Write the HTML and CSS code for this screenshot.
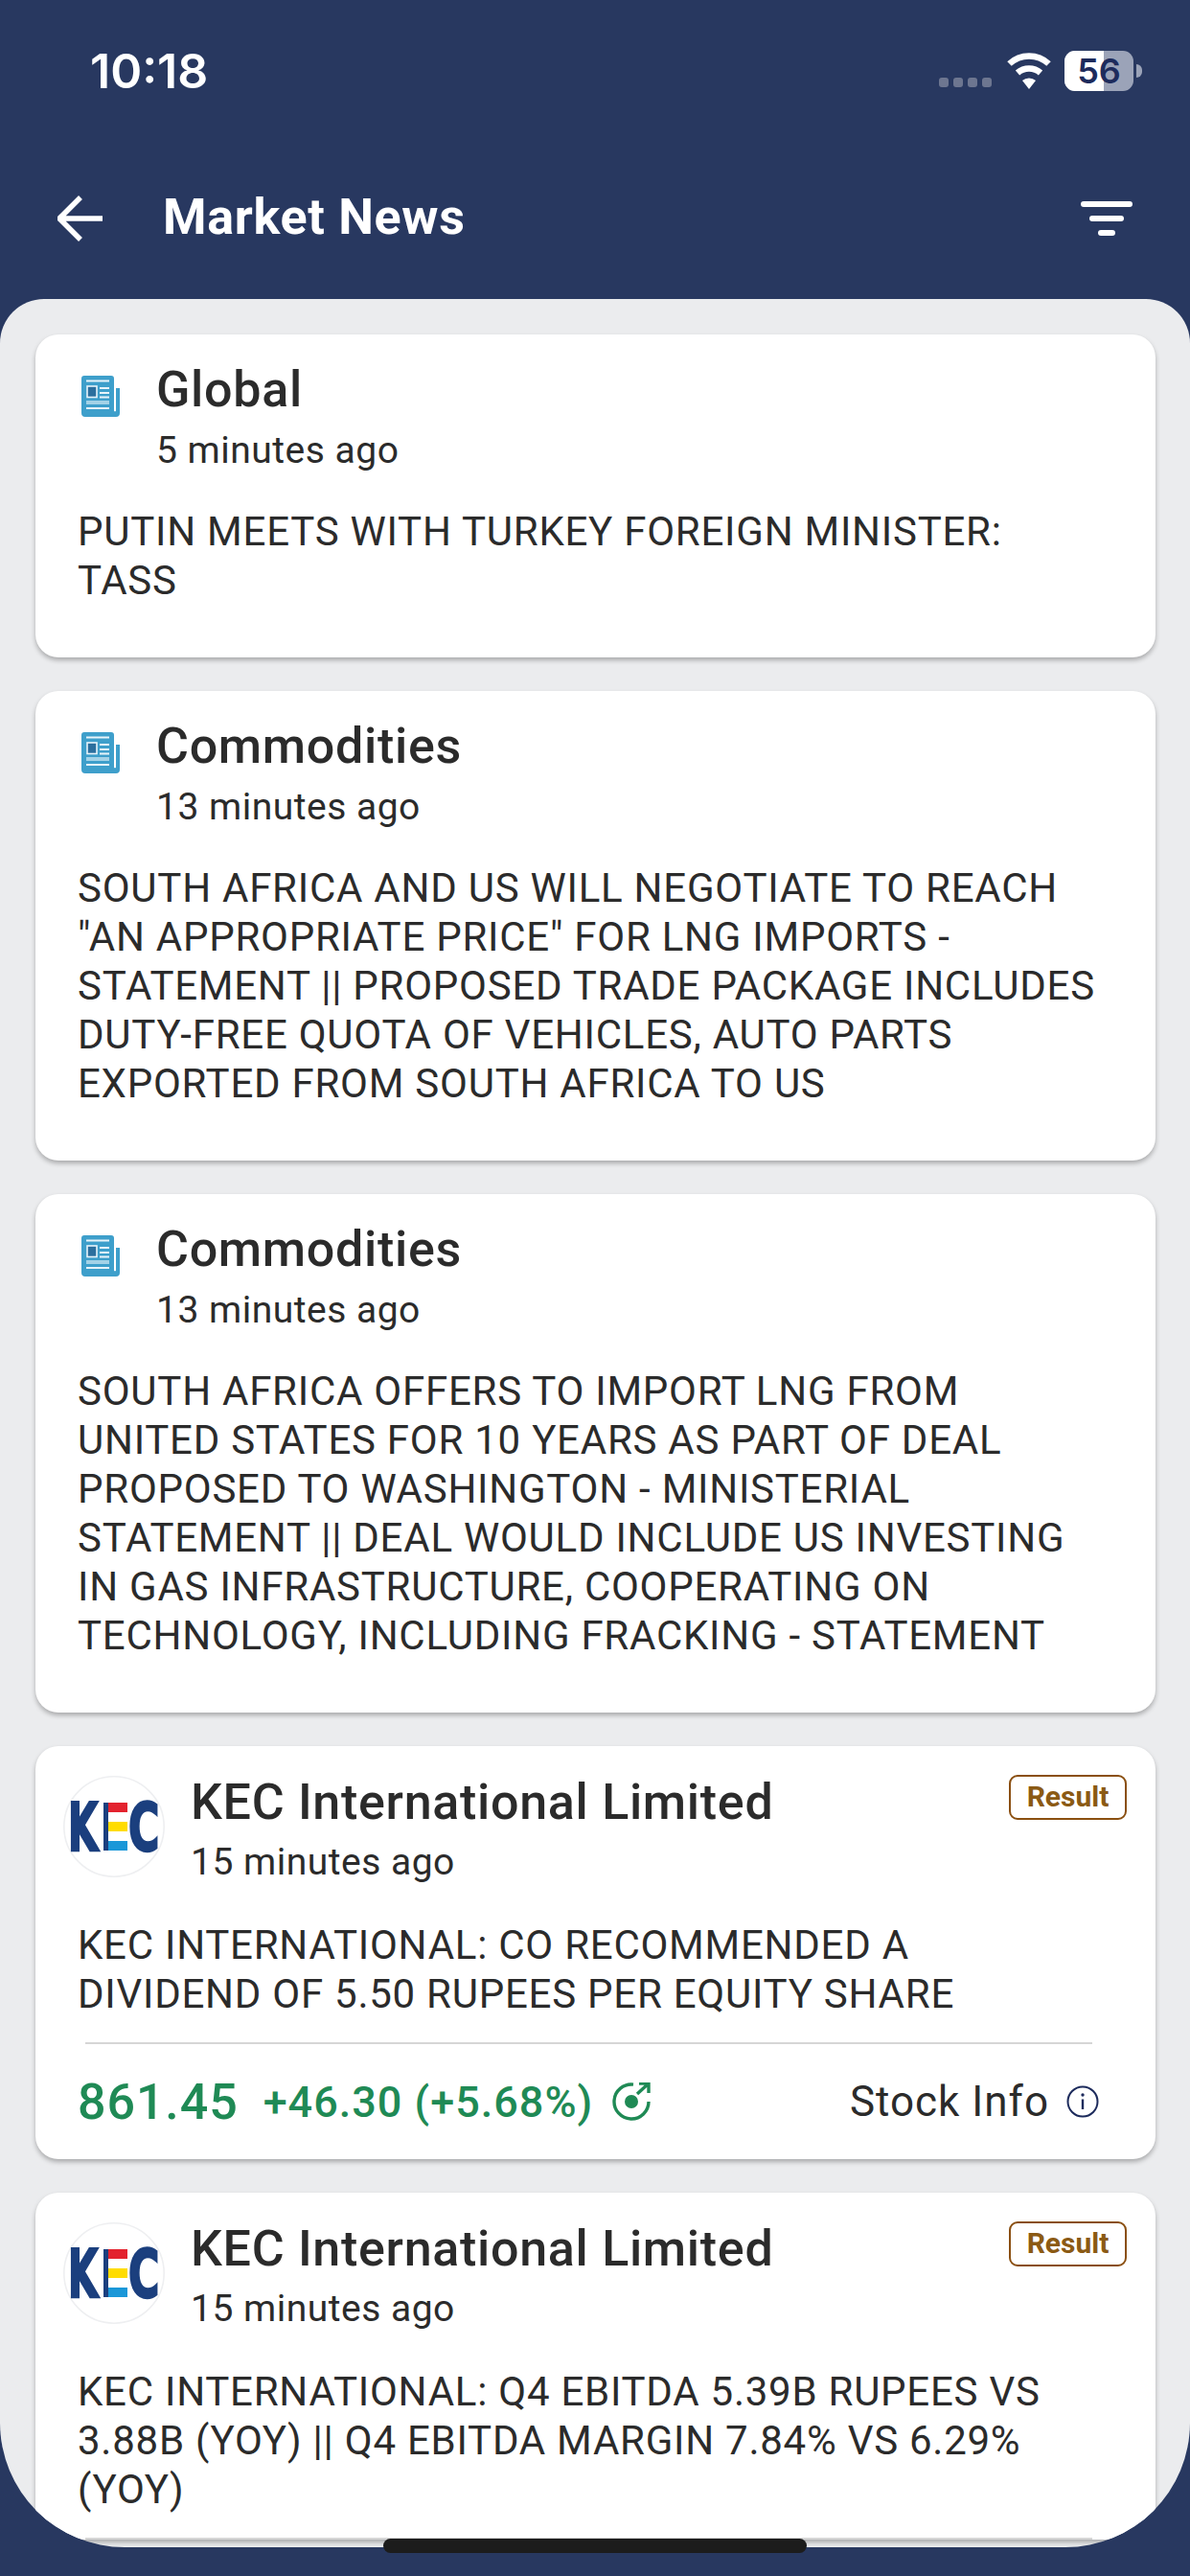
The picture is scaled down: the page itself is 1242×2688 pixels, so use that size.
FILE: index.html
```html
<!DOCTYPE html>
<html lang="en">
<head>
<meta charset="UTF-8">
<title>Market News</title>
<link rel="stylesheet" href="styles.css">
</head>
<body>

<div class="statusbar">
  <span class="clock">10:18</span>
  <div class="status-icons">
    <div class="cell-dots"><i></i><i></i><i></i><i></i></div>
    <svg class="wifi" width="48" height="38" viewBox="0 0 48 38">
      <path d="M24 38 L17 29 A11 11 0 0 1 31 29 Z" fill="#fff"/>
      <path d="M12 21 A18 18 0 0 1 36 21 M3.5 11.5 A30 30 0 0 1 44.5 11.5" fill="none" stroke="#fff" stroke-width="6.5"/>
    </svg>
    <div class="battery">
      <div class="battery-body"><div class="battery-fill"></div><span class="battery-num">56</span></div>
      <div class="battery-cap"></div>
    </div>
  </div>
</div>

<div class="topbar">
  <svg class="back" width="48" height="48" viewBox="0 0 48 48">
    <path d="M47 24 H4 M24 2 L2 24 L24 46" fill="none" stroke="#fff" stroke-width="5.5"/>
  </svg>
  <h1 class="page-title">Market News</h1>
  <div class="filter"><i></i><i></i><i></i></div>
</div>

<main class="sheet">

  <article class="card">
    <div class="head">
      <svg class="news-icon" width="40" height="43" viewBox="0 0 40 43"><use href="#news"/></svg>
      <div class="head-text">
        <div class="title">Global</div>
        <div class="time">5 minutes ago</div>
      </div>
    </div>
    <p class="body-text">PUTIN MEETS WITH TURKEY FOREIGN MINISTER: TASS</p>
  </article>

  <article class="card">
    <div class="head">
      <svg class="news-icon" width="40" height="43" viewBox="0 0 40 43"><use href="#news"/></svg>
      <div class="head-text">
        <div class="title">Commodities</div>
        <div class="time">13 minutes ago</div>
      </div>
    </div>
    <p class="body-text">SOUTH AFRICA AND US WILL NEGOTIATE TO REACH "AN APPROPRIATE PRICE" FOR LNG IMPORTS - STATEMENT || PROPOSED TRADE PACKAGE INCLUDES DUTY-FREE QUOTA OF VEHICLES, AUTO PARTS EXPORTED FROM SOUTH AFRICA TO US</p>
  </article>

  <article class="card">
    <div class="head">
      <svg class="news-icon" width="40" height="43" viewBox="0 0 40 43"><use href="#news"/></svg>
      <div class="head-text">
        <div class="title">Commodities</div>
        <div class="time">13 minutes ago</div>
      </div>
    </div>
    <p class="body-text">SOUTH AFRICA OFFERS TO IMPORT LNG FROM UNITED STATES FOR 10 YEARS AS PART OF DEAL PROPOSED TO WASHINGTON - MINISTERIAL STATEMENT || DEAL WOULD INCLUDE US INVESTING IN GAS INFRASTRUCTURE, COOPERATING ON TECHNOLOGY, INCLUDING FRACKING - STATEMENT</p>
  </article>

  <article class="card stock-card">
    <span class="badge">Result</span>
    <div class="head">
      <svg class="logo" width="106" height="106" viewBox="0 0 106 106"><use href="#kec"/></svg>
      <div class="head-text">
        <div class="title">KEC International Limited</div>
        <div class="time">15 minutes ago</div>
      </div>
    </div>
    <p class="body-text">KEC INTERNATIONAL: CO RECOMMENDED A DIVIDEND OF 5.50 RUPEES PER EQUITY SHARE</p>
    <div class="divider"></div>
    <div class="quote">
      <span class="price">861.45</span>
      <span class="change">+46.30 (+5.68%)</span>
      <svg class="target" width="40" height="40" viewBox="0 0 40 40">
        <path d="M22 2.1 A18 18 0 1 0 38 20" fill="none" stroke="#1f8a55" stroke-width="3.4"/>
        <circle cx="20" cy="20" r="7" fill="#1f8a55"/>
        <path d="M26 12 L38 1 M28 1 H38 V11" fill="none" stroke="#1f8a55" stroke-width="3.4"/>
      </svg>
      <span class="stock-info">Stock Info</span>
      <svg class="info" width="34" height="34" viewBox="0 0 34 34">
        <circle cx="17" cy="17" r="15.5" fill="none" stroke="#1d2b5c" stroke-width="2"/>
        <path d="M17 14.5 V25" stroke="#1d2b5c" stroke-width="2.4"/>
        <circle cx="17" cy="10" r="1.7" fill="#1d2b5c"/>
      </svg>
    </div>
  </article>

  <article class="card stock-card">
    <span class="badge">Result</span>
    <div class="head">
      <svg class="logo" width="106" height="106" viewBox="0 0 106 106"><use href="#kec"/></svg>
      <div class="head-text">
        <div class="title">KEC International Limited</div>
        <div class="time">15 minutes ago</div>
      </div>
    </div>
    <p class="body-text">KEC INTERNATIONAL: Q4 EBITDA 5.39B RUPEES VS 3.88B (YOY) || Q4 EBITDA MARGIN 7.84% VS 6.29% (YOY)</p>
    <div class="divider"></div>
  </article>

</main>

<div class="home-bar"></div>

<svg class="defs" width="0" height="0">
  <defs>
    <g id="news">
      <path d="M3 0 H31 A3 3 0 0 1 34 3 V37 A2 2 0 0 0 36 37 V13 H40 V39 A4 4 0 0 1 36 43 H4 A4 4 0 0 1 0 39 V3 A3 3 0 0 1 3 0 Z" fill="#3e9fcb"/>
      <path d="M5 5.5 H29 M19 13 H29 M19 18 H29 M19 22.5 H29 M5 34 H29" stroke="#e8f4fa" stroke-width="1.8"/>
      <rect x="5" y="26" width="24" height="4" fill="#a3d2e7"/>
      <rect x="6" y="11" width="10" height="11.5" fill="#2c6f9e" stroke="#e8f4fa" stroke-width="1.6"/>
    </g>
    <g id="kec">
      <circle cx="53" cy="53" r="52.2" fill="#fff" stroke="#eeeff1" stroke-width="1.6"/>
      <text class="kec-letter" transform="translate(5 78) scale(0.84 1.43)" x="0" y="0">K</text>
      <rect x="42" y="28" width="5" height="50" fill="#1b3f7e"/>
      <rect x="47" y="28" width="20" height="10" fill="#e3222e"/>
      <rect x="47" y="48" width="20" height="10" fill="#ffdc00"/>
      <rect x="47" y="68" width="20" height="10" fill="#1a97d8"/>
      <text class="kec-letter" transform="translate(68 78) scale(0.92 1.43)" x="0" y="0">C</text>
    </g>
  </defs>
</svg>

</body>
</html>
```

FILE: styles.css
```css
:root {
  --navy: #283860;
  --sheet-bg: #ebecee;
  --text: #2b2b2b;
  --green: #1f8a55;
  --brown: #8b5a14;
}
* {
  box-sizing: border-box;
}
html, body {
  margin: 0;
  height: 2688px;
  overflow: hidden;
}
body {
  position: relative;
  background: var(--navy);
  font-family: Roboto, "Liberation Sans", sans-serif;
  color: var(--text);
}
.defs {
  position: absolute;
}

/* status bar */
.statusbar {
  height: 118px;
  display: flex;
  justify-content: space-between;
  align-items: flex-start;
  padding: 44px 50px 0 94px;
  color: #fff;
}
.clock {
  font-family: Inter, Roboto, sans-serif;
  font-size: 50px;
  font-weight: 600;
  line-height: 60px;
}
.status-icons {
  display: flex;
  align-items: flex-start;
  padding-top: 9px;
}
.cell-dots {
  display: flex;
  gap: 5px;
  margin-top: 28px;
  margin-right: 15px;
}
.cell-dots i {
  width: 10px;
  height: 10px;
  border-radius: 3px;
  background: #6d7690;
}
.wifi {
  margin-top: 2px;
  margin-right: 13px;
}
.battery {
  display: flex;
  align-items: center;
}
.battery-body {
  position: relative;
  width: 72px;
  height: 42px;
  border-radius: 11px;
  background: #9ba3b8;
  overflow: hidden;
}
.battery-fill {
  position: absolute;
  left: 0;
  top: 0;
  bottom: 0;
  width: 41px;
  background: #fff;
}
.battery-num {
  position: absolute;
  inset: 0;
  text-align: center;
  font-family: Inter, Roboto, sans-serif;
  font-size: 36px;
  font-weight: 600;
  line-height: 42px;
  color: #1d2b5c;
}
.battery-cap {
  width: 6px;
  height: 14px;
  margin-left: 3px;
  border-radius: 0 7px 7px 0;
  background: #9ba3b8;
}

/* top bar */
.topbar {
  height: 194px;
  display: flex;
  align-items: flex-start;
  padding: 86px 60px 0 60px;
  color: #fff;
}
.page-title {
  margin: -2px 0 0 62px;
  font-size: 52px;
  font-weight: 700;
  line-height: 50px;
  letter-spacing: 0.7px;
}
.filter {
  margin-left: auto;
  margin-top: 6px;
  display: flex;
  flex-direction: column;
  align-items: center;
  gap: 9px;
}
.filter i {
  display: block;
  height: 6px;
  border-radius: 3px;
  background: #fff;
  width: 54px;
}
.filter i:nth-child(2) {
  width: 36px;
}
.filter i:nth-child(3) {
  width: 18px;
}

/* sheet */
.sheet {
  height: 2346px;
  padding: 37px 36px 0 37px;
  background: var(--sheet-bg);
  border-radius: 46px 46px 130px 130px;
  overflow: hidden;
  display: flex;
  flex-direction: column;
  gap: 35px;
}
.card {
  position: relative;
  flex-shrink: 0;
  background: #fff;
  border-radius: 24px;
  box-shadow: 0 3px 5px rgba(0, 0, 0, 0.28);
  padding: 0 54px 55px 44px;
}
.head {
  display: flex;
  align-items: flex-start;
  padding-top: 29px;
}
.news-icon {
  flex-shrink: 0;
  margin: 14px 38px 0 4px;
}
.title {
  font-size: 52px;
  font-weight: 500;
  line-height: 58px;
  letter-spacing: 0.7px;
}
.time {
  margin-top: 14px;
  font-size: 39px;
  line-height: 40px;
  letter-spacing: 0.5px;
}
.body-text {
  margin: 39px 0 0;
  font-size: 42px;
  line-height: 51px;
  letter-spacing: 0.75px;
}

/* stock cards */
.stock-card {
  padding-bottom: 0;
}
.stock-card .head {
  padding-top: 30px;
  margin-left: -15px;
}
.logo {
  flex-shrink: 0;
  margin: 1px 27px 0 0;
}
.stock-card .time {
  margin-top: 13px;
}
.stock-card .body-text {
  margin-top: 41px;
}
.badge {
  position: absolute;
  top: 30px;
  right: 30px;
  width: 123px;
  height: 47px;
  border: 2px solid #8a4f10;
  border-radius: 9px;
  color: var(--brown);
  font-size: 30px;
  font-weight: 700;
  line-height: 42px;
  text-align: center;
}
.divider {
  height: 2px;
  margin: 25px 12px 0 8px;
  background: #d6d6d6;
}
.quote {
  height: 120px;
  display: flex;
  align-items: center;
}
.price {
  font-size: 52px;
  font-weight: 500;
  color: var(--green);
  letter-spacing: 0.9px;
}
.change {
  margin-left: 26px;
  font-size: 45px;
  font-weight: 500;
  color: var(--green);
  letter-spacing: 1px;
}
.target {
  margin-left: 20px;
}
.stock-info {
  margin-left: auto;
  font-size: 44px;
  letter-spacing: 1px;
  color: var(--text);
}
.info {
  margin-left: 18px;
  margin-right: 5px;
}
.kec-letter {
  font-family: "DejaVu Sans", sans-serif;
  font-size: 48px;
  font-weight: 700;
  fill: #1b3f7e;
  stroke: #1b3f7e;
  stroke-width: 1.8px;
}

/* home indicator lies over the sheet */
.home-bar {
  position: absolute;
  left: 400px;
  top: 2649px;
  width: 442px;
  height: 15px;
  border-radius: 8px;
  background: #1c1c1c;
}
```
